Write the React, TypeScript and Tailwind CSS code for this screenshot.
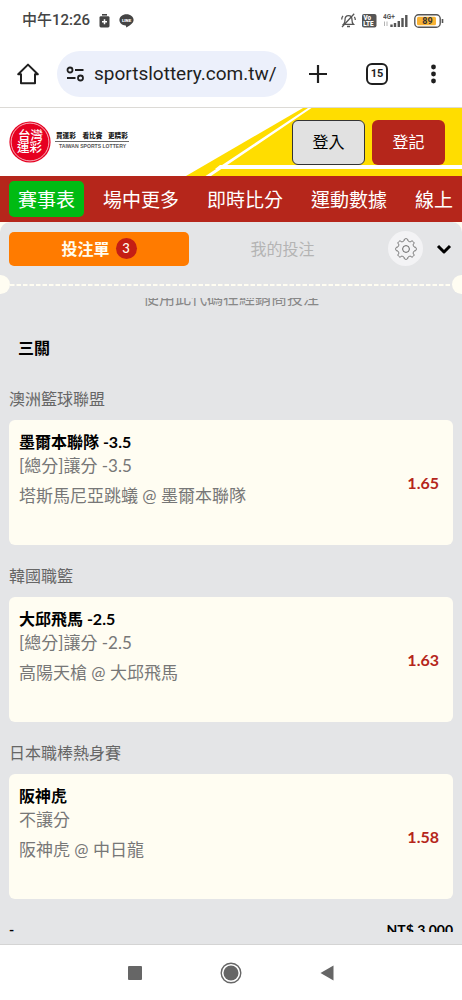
import { ChevronDown } from 'lucide-react';

interface Bet {
  league: string;
  pick: string;
  market: string;
  match: string;
  odds: string;
}

const NAV_ITEMS = ['賽事表', '場中更多', '即時比分', '運動數據', '線上投注'];

const BETS: Bet[] = [
  {
    league: '澳洲籃球聯盟',
    pick: '墨爾本聯隊 -3.5',
    market: '[總分]讓分 -3.5',
    match: '塔斯馬尼亞跳蟻 @ 墨爾本聯隊',
    odds: '1.65',
  },
  {
    league: '韓國職籃',
    pick: '大邱飛馬 -2.5',
    market: '[總分]讓分 -2.5',
    match: '高陽天槍 @ 大邱飛馬',
    odds: '1.63',
  },
  {
    league: '日本職棒熱身賽',
    pick: '阪神虎',
    market: '不讓分',
    match: '阪神虎 @ 中日龍',
    odds: '1.58',
  },
];

// eight soft teeth around a 22x22 box
const GEAR_POINTS = Array.from({ length: 144 }, (_, i) => {
  const angle = (i / 144) * Math.PI * 2;
  const radius = 9.2 + 1.1 * Math.tanh(2.5 * Math.cos(8 * angle));
  return `${(11 + radius * Math.cos(angle)).toFixed(2)},${(11 + radius * Math.sin(angle)).toFixed(2)}`;
}).join(' ');

function StatusBar() {
  return (
    <div className="flex h-[41px] items-center justify-between pl-[22px] pr-[18px] font-['Roboto','Noto_Sans_CJK_TC',sans-serif] text-[#444]">
      <div className="flex items-center gap-[9px]">
        <span className="text-[15px] font-medium">中午12:26</span>
        <svg width="11" height="14" viewBox="0 0 11 14" aria-hidden="true">
          <rect x="3" y="0" width="5" height="1.6" fill="#444" />
          <rect x="0.5" y="2.2" width="10" height="11.3" rx="1.4" fill="#444" />
          <path d="M5.5 5.2v5M3 7.7h5" stroke="#fff" strokeWidth="1.5" />
        </svg>
        <svg width="15" height="14" viewBox="0 0 15 14" aria-hidden="true">
          <path
            d="M7.5 0.3C3.5 0.3 0.4 2.9 0.4 6c0 2.9 2.7 5.2 6.2 5.6.6.1.5.8.5 1.9 2.6-1.3 7.5-4 7.5-7.5C14.6 2.9 11.5.3 7.5.3Z"
            fill="#444"
          />
          <text x="7.5" y="7.7" textAnchor="middle" fontSize="4.4" fontWeight="900" fill="#fff">
            LINE
          </text>
        </svg>
      </div>
      <div className="flex items-center gap-[6px]">
        <svg width="15" height="15" viewBox="0 0 15 15" fill="none" stroke="#555" strokeWidth="1.3" aria-hidden="true">
          <path d="M2.600 11.300c1-.9 1.400-1.700 1.400-4.300 0-2.600 1.300-4.400 3.500-4.400S11 4.400 11 7c0 2.600.4 3.400 1.400 4.300Z" />
          <path d="M6 13.500h3M1 14 13.200.7M.7 6.500c0-1.500.4-2.600 1.300-3.600M14.300 7c0-1.300-.3-2.300-.9-3.200" />
        </svg>
        <svg width="15" height="14" viewBox="0 0 15 14" aria-hidden="true">
          <rect width="14.5" height="13.5" rx="2" fill="#555" />
          <text x="1.5" y="6.3" fontSize="6.3" fontWeight="900" fill="#fff">
            Vo
          </text>
          <text x="1.3" y="12.3" fontSize="6.3" fontWeight="900" fill="#fff">
            LTE
          </text>
        </svg>
        <svg width="25" height="15" viewBox="0 0 25 15" aria-hidden="true">
          <text x="0" y="5.5" fontSize="6.5" fontWeight="700" fill="#555">
            4G+
          </text>
          <path d="M1.500 13V8.500M4 8.500V13" stroke="#aaa" strokeWidth="0.9" />
          <path
            d="M8.500 14v-2.500M12 14v-4M15.800 14V8M19.500 14V5M23.300 14V2"
            stroke="#555"
            strokeWidth="2.4"
          />
        </svg>
        <svg width="30" height="14" viewBox="0 0 30 14" aria-hidden="true">
          <rect x="0.8" y="0.8" width="25.4" height="12.4" rx="3.8" fill="#fff" stroke="#555" strokeWidth="1.4" />
          <rect x="3" y="2.8" width="19" height="8.4" rx="1.5" fill="#f9b233" />
          <path d="M28.500 5v4" stroke="#555" strokeWidth="1.6" />
          <text x="13.5" y="10.2" textAnchor="middle" fontSize="9" fontWeight="700" fill="#333">
            89
          </text>
        </svg>
      </div>
    </div>
  );
}

function BrowserBar() {
  return (
    <div className="flex h-[67px] items-center border-b border-[#dcdad6] pl-[17px] pr-[19px] text-[#1f1f1f]">
      <button type="button" aria-label="首頁" className="shrink-0">
        <svg width="22" height="22" viewBox="0 0 22 22" fill="none" stroke="currentColor" strokeWidth="2">
          <path d="M1.200 11.200 11 1.600l9.800 9.600H18v9H4v-9Z" strokeLinejoin="round" />
        </svg>
      </button>
      <div className="ml-[18px] flex h-[46px] min-w-0 flex-1 items-center rounded-full bg-[#ecf0fb] px-[9px]">
        <svg width="19" height="16" viewBox="0 0 19 16" fill="none" stroke="currentColor" strokeWidth="1.8" className="shrink-0" aria-hidden="true">
          <circle cx="4" cy="4" r="2.5" />
          <circle cx="14.5" cy="12" r="2.5" />
          <path d="M9 4h8.500M1 12h8.500" />
        </svg>
        <input
          type="text"
          aria-label="網址"
          defaultValue="sportslottery.com.tw/"
          className="ml-[9px] min-w-0 flex-1 bg-transparent font-['Roboto',sans-serif] text-[19px] outline-none"
        />
      </div>
      <button type="button" aria-label="新增分頁" className="ml-[21px] shrink-0">
        <svg width="20" height="20" viewBox="0 0 20 20" stroke="currentColor" strokeWidth="2.2">
          <path d="M10 1v18M1 10h18" />
        </svg>
      </button>
      <button
        type="button"
        aria-label="15 個分頁"
        className="ml-[38px] flex size-[22px] shrink-0 items-center justify-center rounded-md border-2 border-current font-['Roboto',sans-serif] text-[11px] font-bold"
      >
        15
      </button>
      <button type="button" aria-label="更多" className="ml-[35px] shrink-0">
        <svg width="20" height="20" viewBox="0 0 20 20" fill="currentColor">
          <circle cx="10.5" cy="3" r="2.4" />
          <circle cx="10.5" cy="10" r="2.4" />
          <circle cx="10.5" cy="17" r="2.4" />
        </svg>
      </button>
    </div>
  );
}

function Logo() {
  return (
    <a href="#" aria-label="台灣運彩">
      <svg
        width="122"
        height="42"
        viewBox="0 0 122 42"
        className="font-['Liberation_Sans','Noto_Sans_CJK_TC',sans-serif]"
      >
        <circle cx="21" cy="21" r="20.6" fill="#e60020" />
        <circle cx="21" cy="21" r="18.9" fill="none" stroke="#fff" strokeWidth="0.7" />
        <g fill="#fff" fontSize="12.5" fontWeight="500" textAnchor="middle">
          <text x="21.5" y="19">台灣</text>
          <text x="20.5" y="31">運彩</text>
        </g>
        <g fill="#222" fontSize="6.6" fontWeight="900">
          <text x="47" y="17">買運彩</text>
          <text x="73.5" y="17">看比賽</text>
          <text x="99" y="17">更精彩</text>
        </g>
        <path d="M46 20.500h74" stroke="#444" strokeWidth="0.8" />
        <text x="50" y="27" fontSize="5.1" fontWeight="700" fill="#555">
          TAIWAN SPORTS LOTTERY
        </text>
      </svg>
    </a>
  );
}

function SiteHeader() {
  return (
    <header className="relative flex h-[68px] items-center justify-between bg-white pl-[9px] pr-[17px]">
      <svg className="absolute right-0 top-0" width="276" height="68" viewBox="0 0 276 68" aria-hidden="true">
        <path d="M0 68 117 0h159v68Z" fill="#ffdd00" />
        <path d="M19.500 68 122 0h3.500L25 68ZM34 57h242v4H29Z" fill="#fff" />
      </svg>
      <Logo />
      <div className="relative flex gap-[7px]">
        <button type="button" className="h-[45px] w-[73px] rounded-md border border-[#333] bg-[#e1e1e1] text-[16px] text-black">
          登入
        </button>
        <button type="button" className="h-[45px] w-[73px] rounded-md bg-[#b5261b] text-[16px] text-white">
          登記
        </button>
      </div>
    </header>
  );
}

function SiteNav() {
  return (
    <nav className="bg-[#b5261b] px-[9px] py-[5px]">
      <div className="flex gap-[10px] overflow-hidden text-[19px] leading-[36px] text-white">
        {NAV_ITEMS.map((item, index) => (
          <a
            key={item}
            href="#"
            className={`h-[36px] shrink-0 rounded-[5px] px-[9px] pt-px ${index === 0 ? 'bg-[#00bb13]' : ''}`}
          >
            {item}
          </a>
        ))}
      </div>
    </nav>
  );
}

function SlipTabs() {
  return (
    <div className="flex items-center pl-[9px] pr-[6px] pt-[9px]">
      <button
        type="button"
        className="flex h-[34px] w-[180px] items-center justify-center gap-[6px] rounded-[5px] bg-[#ff7b00] text-[16px] font-bold text-[#fffdf0]"
      >
        投注單
        <span className="flex size-[21px] items-center justify-center rounded-full bg-[#c41e14] text-[13px] font-medium">
          3
        </span>
      </button>
      <button type="button" className="mr-[12px] flex-1 text-[16px] text-[#b4b4b4]">
        我的投注
      </button>
      <button type="button" aria-label="設定" className="flex size-[35px] items-center justify-center rounded-full bg-[#f3f3f5]">
        <svg width="22" height="22" viewBox="0 0 22 22" fill="none" stroke="#666" strokeWidth="1">
          <polygon points={GEAR_POINTS} />
          <circle cx="11" cy="11" r="3.4" />
        </svg>
      </button>
      <button type="button" aria-label="收合" className="ml-[9px]">
        <ChevronDown className="size-[24px] text-black" strokeWidth={3} strokeLinecap="butt" />
      </button>
    </div>
  );
}

function TicketDivider() {
  return (
    <div className="-mx-[9px] mt-[9px] flex items-center overflow-hidden">
      <span className="size-[19px] shrink-0 rounded-full bg-[#fffdf2]" />
      <svg className="h-[2px] min-w-0 flex-1" aria-hidden="true">
        <line x1="0" y1="1" x2="100%" y2="1" stroke="#fffdf2" strokeWidth="2" strokeDasharray="4.500 2" />
      </svg>
      <span className="size-[19px] shrink-0 rounded-full bg-[#fffdf2]" />
    </div>
  );
}

function BetCard({ bet }: { bet: Bet }) {
  return (
    <section>
      <h3 className="mb-[8px] text-[16px] leading-[26px] text-[#666]">{bet.league}</h3>
      <div className="mb-[18px] flex h-[125px] items-center justify-between rounded-md bg-[#fffdf2] pl-[10px] pr-[14px]">
        <div className="self-start pt-[10px] text-[17px] leading-[24px] text-[#777]">
          <p className="text-[16px] font-bold text-black">{bet.pick}</p>
          <p>{bet.market}</p>
          <p className="mt-[6px]">{bet.match}</p>
        </div>
        <span className="text-[16px] font-bold text-[#b5261b]">{bet.odds}</span>
      </div>
    </section>
  );
}

function SystemNav() {
  return (
    <div className="flex h-[56px] items-center justify-center gap-[78px] border-t border-[#d4d4d4] bg-white text-[#666]">
      <button type="button" aria-label="最近使用" className="size-[14px] rounded-[1px] bg-current" />
      <button type="button" aria-label="主畫面">
        <svg width="22" height="22" viewBox="0 0 22 22">
          <circle cx="11" cy="11" r="9.8" fill="none" stroke="currentColor" strokeWidth="1.4" />
          <circle cx="11" cy="11" r="7.5" fill="currentColor" />
        </svg>
      </button>
      <button type="button" aria-label="返回">
        <svg width="14" height="16" viewBox="0 0 14 16">
          <path d="M13.500.5v15L.5 8Z" fill="currentColor" />
        </svg>
      </button>
    </div>
  );
}

export default function App() {
  return (
    <div className="flex h-screen flex-col overflow-hidden bg-white font-['Lato','Noto_Sans_CJK_TC',sans-serif]">
      <StatusBar />
      <BrowserBar />
      <SiteHeader />
      <SiteNav />
      <main className="flex min-h-0 flex-1 flex-col bg-[#fffdf2]">
        <div className="flex min-h-0 flex-1 flex-col overflow-hidden rounded-t-[10px] bg-[#e4e5e7] pb-[12px]">
          <SlipTabs />
          <TicketDivider />
          <div className="mt-[4px] flex min-h-0 flex-1 flex-col overflow-hidden px-[9px]">
            <p className="-mt-[12px] shrink-0 text-center text-[16px] leading-[24px] text-[#888]">
              使用此代碼在經銷商投注
            </p>
            <h2 className="my-[26px] shrink-0 px-[9px] text-[16px] font-bold leading-[24px] text-black">三關</h2>
            {BETS.map((bet) => (
              <BetCard key={bet.league} bet={bet} />
            ))}
            <div className="flex shrink-0 justify-between text-[14px] font-bold leading-[26px] text-black">
              <span>-</span>
              <span>NT$ 3,000</span>
            </div>
          </div>
        </div>
      </main>
      <SystemNav />
    </div>
  );
}
